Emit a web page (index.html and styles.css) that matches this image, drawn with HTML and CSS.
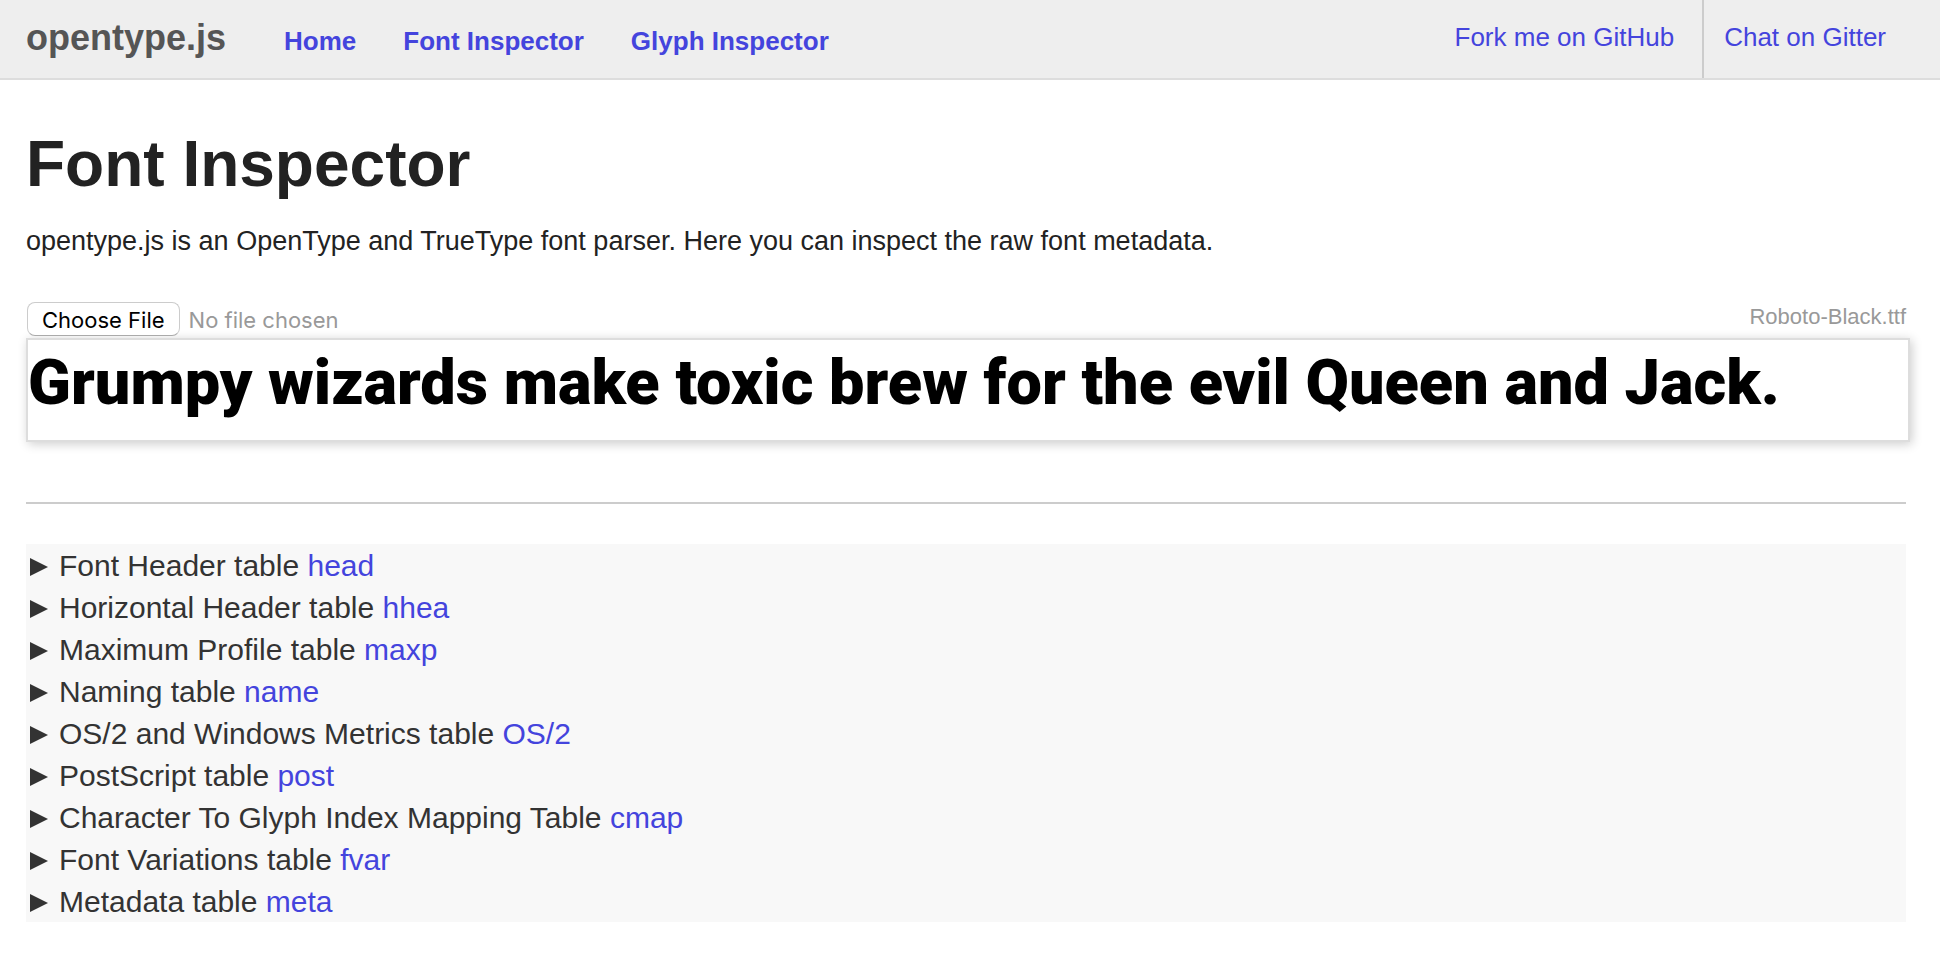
FILE: index.html
```html
<!DOCTYPE html>
<html lang="en">
<head>
<meta charset="utf-8">
<title>opentype.js – Font Inspector</title>
<meta name="viewport" content="width=device-width, initial-scale=1">
<link rel="stylesheet" href="styles.css">
</head>
<body>
<header class="header">
  <h1 class="logo">opentype.js</h1>
  <nav class="nav">
    <a href="#home">Home</a>
    <a href="#font-inspector">Font Inspector</a>
    <a href="#glyph-inspector">Glyph Inspector</a>
  </nav>
  <div class="right">
    <a class="right-link" href="#github">Fork me on GitHub</a>
    <a class="right-link right-link-divided" href="#gitter">Chat on Gitter</a>
  </div>
</header>
<main class="container">
  <h2 class="title">Font Inspector</h2>
  <p class="intro">opentype.js is an OpenType and TrueType font parser. Here you can inspect the raw font metadata.</p>
  <div class="file-row">
    <input class="file" type="file" aria-label="Font file">
    <span class="font-name">Roboto-Black.ttf</span>
  </div>
  <div class="preview">Grumpy wizards make toxic brew for the evil Queen and Jack.</div>
  <hr class="rule">
  <section class="tables">
    <details><summary>Font Header table <a href="#head">head</a></summary></details>
    <details><summary>Horizontal Header table <a href="#hhea">hhea</a></summary></details>
    <details><summary>Maximum Profile table <a href="#maxp">maxp</a></summary></details>
    <details><summary>Naming table <a href="#name">name</a></summary></details>
    <details><summary>OS/2 and Windows Metrics table <a href="#os2">OS/2</a></summary></details>
    <details><summary>PostScript table <a href="#post">post</a></summary></details>
    <details><summary>Character To Glyph Index Mapping Table <a href="#cmap">cmap</a></summary></details>
    <details><summary>Font Variations table <a href="#fvar">fvar</a></summary></details>
    <details><summary>Metadata table <a href="#meta">meta</a></summary></details>
  </section>
</main>
</body>
</html>
```
FILE: styles.css
```css
* {
  box-sizing: border-box;
}

body {
  margin: 0;
  background: #fff;
  color: #222;
  font: 27px/40px "Liberation Sans", Helvetica, Arial, sans-serif;
}

a {
  color: #4444dd;
  text-decoration: none;
}

.header {
  display: flex;
  padding: 0 34px 0 26px;
  background: #eee;
  border-bottom: 2px solid #ddd;
}

.logo {
  margin: 0;
  padding: 18px 58px 20px 0;
  color: #555;
  font-size: 36px;
  line-height: 40px;
}

.nav {
  display: flex;
  gap: 47px;
  padding: 21px 0 17px;
  font-size: 26px;
  font-weight: bold;
}

.right {
  display: flex;
  margin-left: auto;
  font-size: 26px;
}

.right-link {
  padding: 17px 28px 21px 0;
}

.right-link-divided {
  padding: 17px 20px 21px;
  border-left: 2px solid #ccc;
}

.container {
  padding: 48px 34px 38px 26px;
}

.title {
  margin: 0;
  font-size: 64px;
  line-height: 72px;
}

.intro {
  margin: 21px 0 39px;
}

.file-row {
  display: flex;
  align-items: flex-start;
  justify-content: space-between;
  padding: 2px 0;
  color: #999;
  font-size: 22px;
}

.font-name {
  line-height: 30px;
}

.file {
  height: 34px;
  padding: 0 1px;
  color: #999;
  font: 22px/30px Inter, sans-serif;
}

.file::file-selector-button {
  height: 34px;
  margin: 0 9px 0 0;
  padding: 2px 14px 0;
  border: 1px solid #ccc;
  border-bottom-color: #aaa;
  border-radius: 8px;
  background: #fff;
  color: #000;
  font: inherit;
}

.preview {
  margin-right: -4px;
  padding: 5px 0 19px;
  border: 2px solid #ddd;
  background: #fff;
  box-shadow: 2px 2px 10px rgba(0, 0, 0, 0.2);
  color: #000;
  font: 900 63px/76px Roboto, sans-serif;
}

.rule {
  height: 2px;
  margin: 60px 0 40px;
  border: 0;
  background: #ccc;
}

.tables {
  background: #f8f8f8;
  color: #333;
  font-size: 30px;
  line-height: 40px;
}

.tables summary {
  padding: 2px 0 0 4px;
  list-style: none;
  cursor: pointer;
}

.tables summary::before {
  content: "";
  display: inline-block;
  width: 18px;
  height: 18px;
  margin-right: 11px;
  background: #333;
  clip-path: polygon(0 0, 100% 50%, 0 100%);
}
```
